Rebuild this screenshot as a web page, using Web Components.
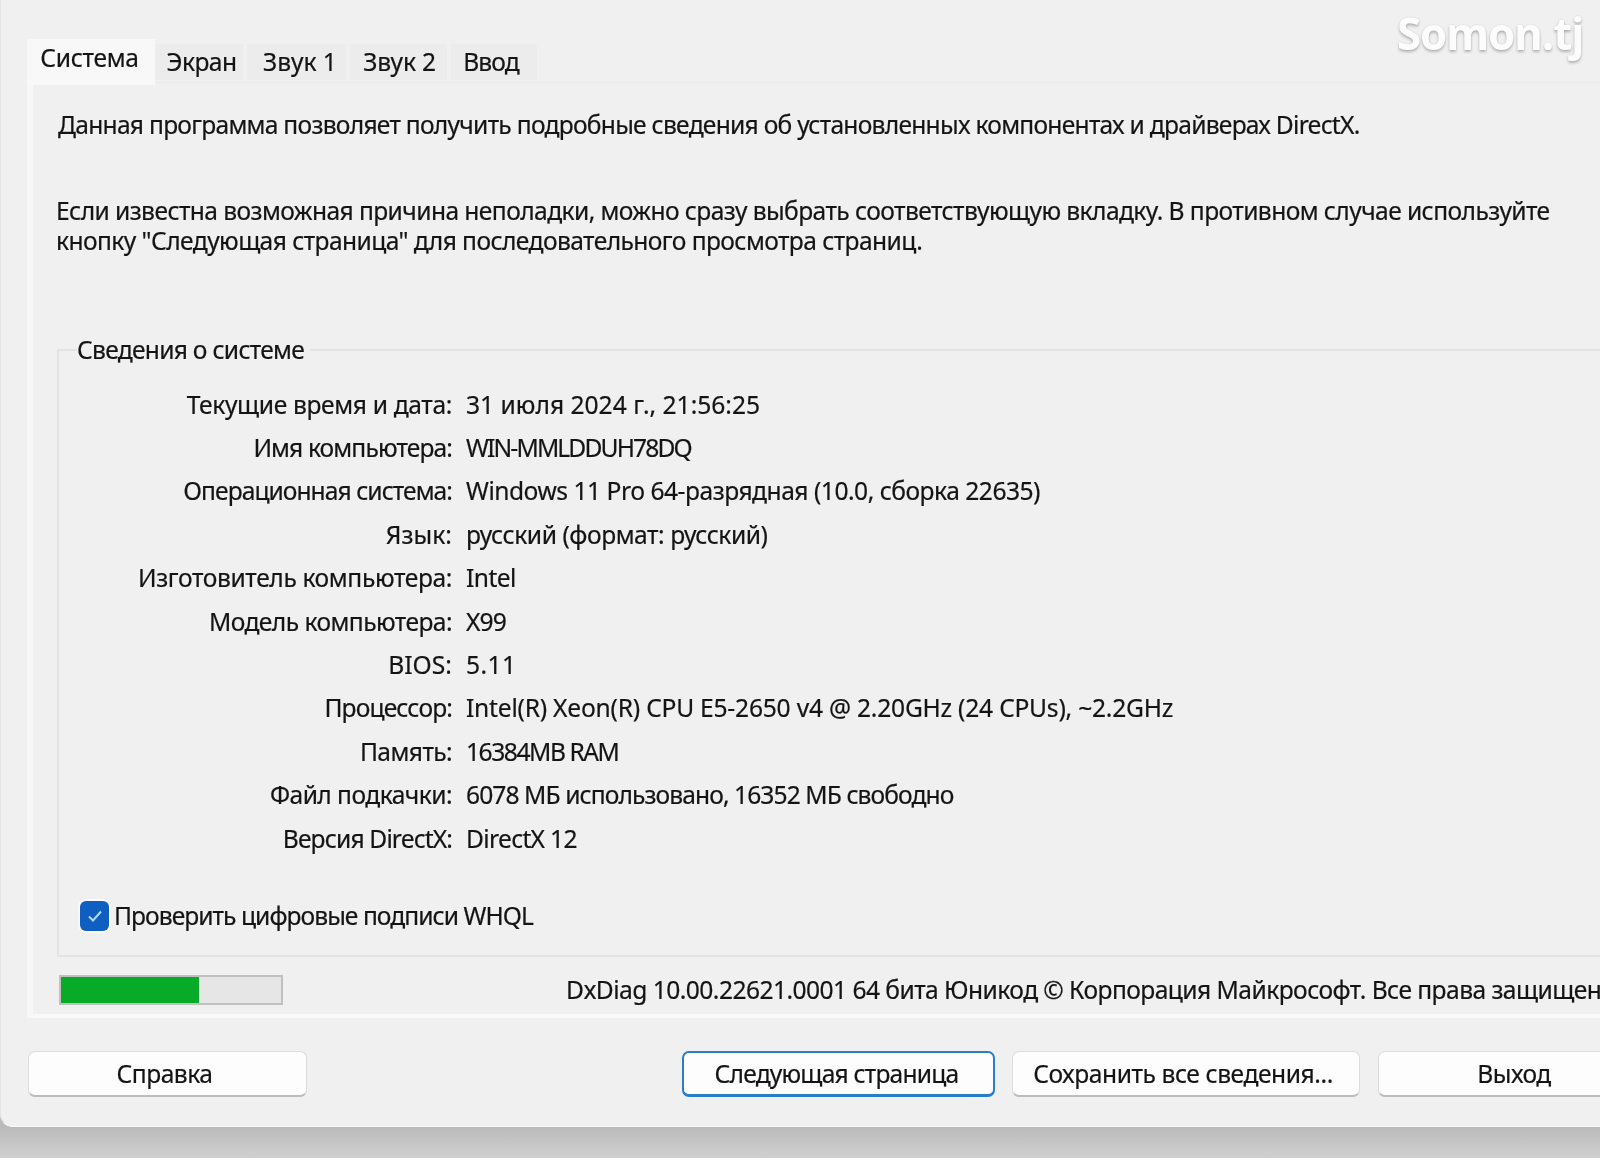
<!DOCTYPE html>
<html lang="ru">
<head>
<meta charset="utf-8">
<title>DxDiag</title>
<style>
  html, body { margin: 0; height: 100%; overflow: hidden; }
  body {
    background: linear-gradient(#bababa 0, #bababa 1127px, #d0d0d0 100%);
    font: 24.6px/30px "Noto Sans", "Open Sans", sans-serif;
    color: #141414;
    letter-spacing: -.55px;
    -webkit-text-stroke: .2px #141414;
  }
</style>
</head>
<body>
<dx-window>
  <dx-tabs slot="tabs">
    <dx-tab active style="letter-spacing:-.3px;padding-right:3px">Система</dx-tab>
    <dx-tab style="width:88px;padding-left:5px">Экран</dx-tab>
    <dx-tab style="width:99px;letter-spacing:0;padding-left:7px">Звук 1</dx-tab>
    <dx-tab style="width:97px;letter-spacing:-.2px;padding-left:2px">Звук 2</dx-tab>
    <dx-tab style="width:86px;letter-spacing:-.85px;padding-right:6px">Ввод</dx-tab>
  </dx-tabs>
  <dx-panel slot="panel">
    <p style="margin:0 0 0 25px;letter-spacing:-.73px">Данная программа позволяет получить подробные сведения об установленных компонентах и драйверах DirectX.</p>
    <p style="margin:56px 0 0 23px;letter-spacing:-.58px">Если известна возможная причина неполадки, можно сразу выбрать соответствующую вкладку. В противном случае используйте<br>кнопку "Следующая страница" для последовательного просмотра страниц.</p>
    <dx-group title="Сведения о системе">
      <dx-row label="Текущие время и дата:" ls="-.35" style="letter-spacing:0">31 июля 2024 г., 21:56:25</dx-row>
      <dx-row label="Имя компьютера:" ls="-.88" style="letter-spacing:-1.85px">WIN-MMLDDUH78DQ</dx-row>
      <dx-row label="Операционная система:" ls="-.95" style="letter-spacing:-.49px">Windows 11 Pro 64-разрядная (10.0, сборка 22635)</dx-row>
      <dx-row label="Язык:" ls=".05" style="letter-spacing:-.45px">русский (формат: русский)</dx-row>
      <dx-row label="Изготовитель компьютера:" ls="-.38">Intel</dx-row>
      <dx-row label="Модель компьютера:" ls="-.56" style="letter-spacing:-.85px">X99</dx-row>
      <dx-row label="BIOS:" ls=".05" style="letter-spacing:.45px">5.11</dx-row>
      <dx-row label="Процессор:" ls="-.85" style="letter-spacing:-.22px">Intel(R) Xeon(R) CPU E5-2650 v4 @ 2.20GHz (24 CPUs), ~2.2GHz</dx-row>
      <dx-row label="Память:" style="letter-spacing:-1.45px">16384MB RAM</dx-row>
      <dx-row label="Файл подкачки:" ls="-.55" style="letter-spacing:-.91px">6078 МБ использовано, 16352 МБ свободно</dx-row>
      <dx-row label="Версия DirectX:" ls="-.85" style="letter-spacing:-.65px">DirectX 12</dx-row>
      <dx-check style="letter-spacing:-.95px">Проверить цифровые подписи WHQL</dx-check>
    </dx-group>
    <dx-status>DxDiag 10.00.22621.0001 64 бита Юникод © Корпорация Майкрософт. Все права защищены.</dx-status>
  </dx-panel>
  <dx-button slot="buttons" style="width:279px;letter-spacing:-.5px;padding-right:6px">Справка</dx-button>
  <dx-button slot="buttons" focused style="width:313px;margin-left:375px;letter-spacing:-.8px;padding-right:4px">Следующая страница</dx-button>
  <dx-button slot="buttons" style="width:348px;margin-left:17px;letter-spacing:-.43px;padding-right:6px">Сохранить все сведения...</dx-button>
  <dx-button slot="buttons" style="width:276px;margin-left:18px;padding-right:4px">Выход</dx-button>
</dx-window>
<dx-watermark>Somon.tj</dx-watermark>

<script>
function define(name, css, html) {
  customElements.define(name, class extends HTMLElement {
    constructor() {
      super();
      this.attachShadow({ mode: 'open' });
    }
    connectedCallback() {
      this.shadowRoot.innerHTML = `<style>${css}</style>${typeof html === 'function' ? html(this) : html}`;
    }
  });
}

define('dx-window', `
  :host {
    display: block;
    width: 1720px;
    height: 1127px;
    box-sizing: border-box;
    padding: 39px 0 0 26px;
    background: #f0f0f0;
    border-radius: 0 0 0 13px;
    border-left: 1px solid #e4e4e4;
    border-bottom: 1px solid #fafafa;
    filter: blur(.5px);
  }
  .buttons { display: flex; margin: 33px 0 0 1px; }
`, `
  <slot name="tabs"></slot>
  <slot name="panel"></slot>
  <div class="buttons"><slot name="buttons"></slot></div>
`);

define('dx-tabs', `
  :host { display: flex; align-items: flex-end; height: 43px; gap: 4px; position: relative; z-index: 1; }
`, `<slot></slot>`);

define('dx-tab', `
  :host {
    display: flex;
    align-items: center;
    justify-content: center;
    box-sizing: border-box;
    height: 36px;
    margin-bottom: 2px;
    margin-left: -4px;
    margin-right: 4px;
    background: #ececec;
  }
  :host([active]) {
    width: 128px;
    height: 46px;
    margin: 0 0 -3px;
    padding-bottom: 9px;
    background: #f8f8f8;
  }
`, `<slot></slot>`);

define('dx-panel', `
  :host {
    display: block;
    box-sizing: border-box;
    height: 936px;
    padding: 27px 0 0;
    border-top: 1px solid #ebebeb;
    border-left: 6px solid #f7f7f7;
    border-bottom: 4px solid #f9f9f9;
    white-space: nowrap;
  }
`, `<slot></slot>`);

define('dx-group', `
  :host { display: block; margin: 79px 0 0 24px; }
  fieldset {
    margin: 0;
    padding: 18px 0 24px 0;
    border: 2px solid #e3e3e3;
    border-right: 0;
  }
  legend { margin-left: 18px; padding: 0 6px 0 0; line-height: 30px; letter-spacing: -.72px; }
`, (el) => `
  <fieldset>
    <legend>${el.getAttribute('title')}</legend>
    <slot></slot>
  </fieldset>
`);

define('dx-row', `
  :host {
    display: grid;
    grid-template-columns: 393px auto;
    column-gap: 14px;
    height: 43.4px;
    align-items: center;
  }
  .label { text-align: right; }
`, (el) => `
  <div class="label" style="letter-spacing:${el.getAttribute('ls') || -.55}px">${el.getAttribute('label')}</div>
  <div><slot></slot></div>
`);

define('dx-check', `
  :host {
    display: flex;
    align-items: center;
    gap: 5px;
    height: 30px;
    margin: 41px 0 0 21px;
  }
  .box {
    width: 29px;
    height: 30px;
    border-radius: 6px;
    background: #0f5fc2;
    box-shadow: 0 0 0 2px #fafafa;
    display: flex;
    align-items: center;
    justify-content: center;
  }
`, `
  <div class="box">
    <svg width="20" height="20" viewBox="0 0 20 20"><path d="M4 10.5l4 4 8-9" fill="none" stroke="#b8d6f8" stroke-width="2"/></svg>
  </div>
  <slot></slot>
`);

define('dx-status', `
  :host { display: flex; align-items: center; height: 30px; margin: 18px 0 0 26px; }
  .bar {
    flex: none;
    box-sizing: border-box;
    width: 224px;
    height: 30px;
    border: 2px solid #c0c0c0;
    background: #e6e6e6;
    margin-right: 283px;
  }
  .fill { width: 138px; height: 100%; background: #08ab28; }
`, `
  <div class="bar"><div class="fill"></div></div>
  <slot></slot>
`);

define('dx-button', `
  :host {
    display: flex;
    align-items: center;
    justify-content: center;
    flex: none;
    box-sizing: border-box;
    height: 46px;
    background: #fdfdfd;
    border: 1px solid #dcdcdc;
    border-bottom: 2px solid #bcbcbc;
    border-radius: 7px;
  }
  :host([focused]) { border: 2px solid #2a7dc7; border-bottom-width: 3px; }
`, `<slot></slot>`);

define('dx-watermark', `
  :host {
    position: absolute;
    top: 7px;
    left: 1397px;
    font: 700 44px/52px "Open Sans", sans-serif;
    letter-spacing: -1.2px;
    color: #fcfcfc;
    -webkit-text-stroke: 0;
    text-shadow: 0 2px 3px rgba(0, 0, 0, .25), 0 0 2px rgba(0, 0, 0, .12);
    filter: blur(.5px);
  }
`, `<slot></slot>`);
</script>
</body>
</html>
